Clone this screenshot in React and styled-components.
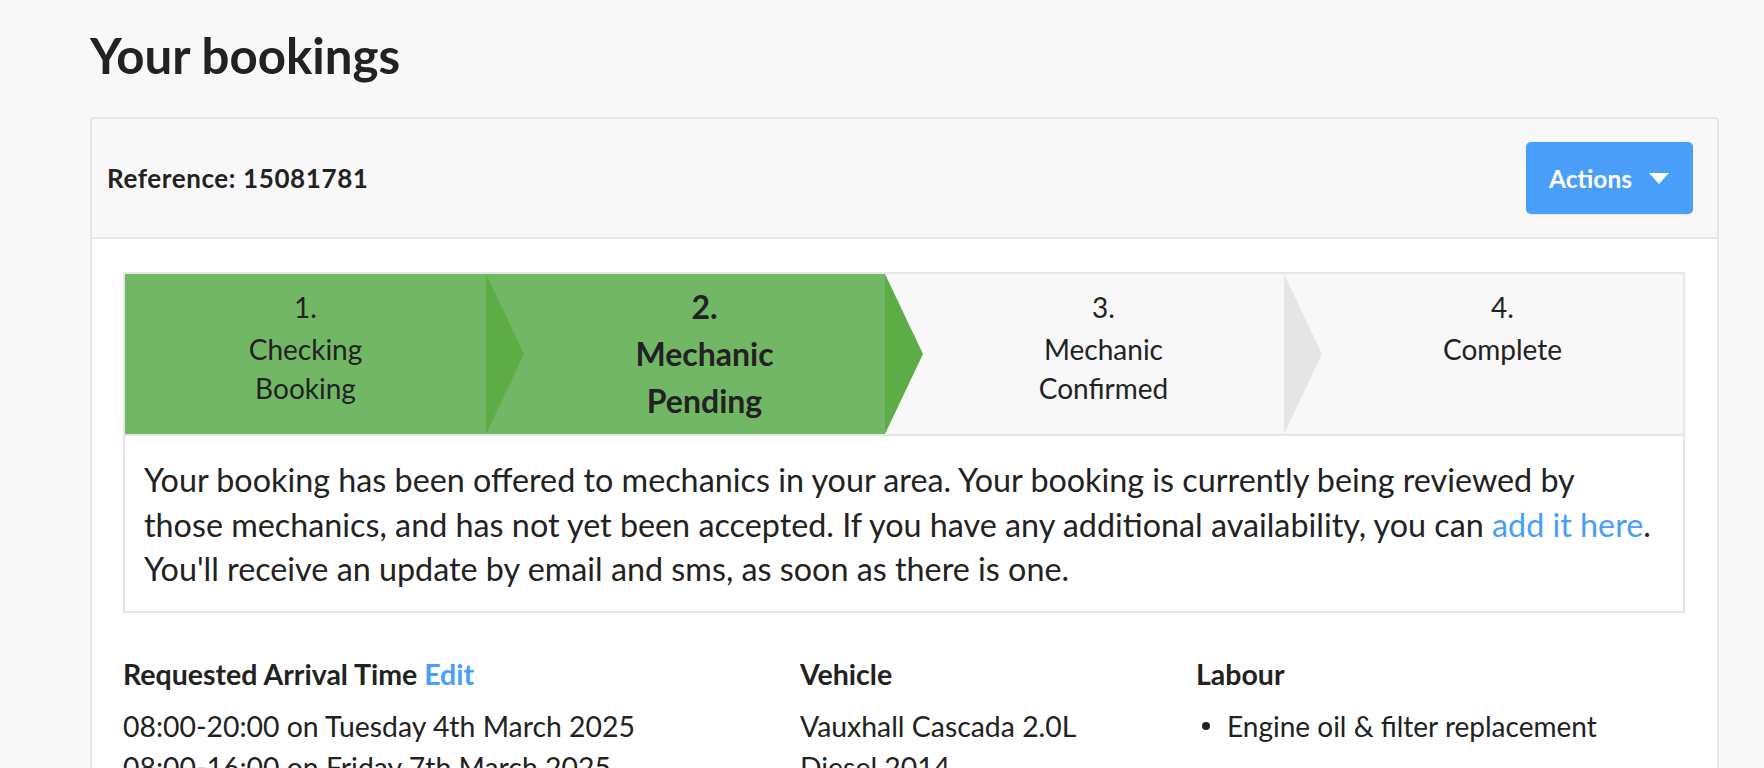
import React from "react";
import styled, { createGlobalStyle } from "styled-components";

const GlobalStyle = createGlobalStyle`
  * { box-sizing: border-box; }
  html, body { margin: 0; padding: 0; background: #f8f8f8; }
  body {
    font-family: Lato, "Liberation Sans", sans-serif;
    color: #222222;
    -webkit-font-smoothing: antialiased;
  }
`;

const Page = styled.main`
  padding: 26px 45px 40px 90px;
`;

const Title = styled.h1`
  margin: 0 0 33px;
  font-size: 49.2px;
  line-height: 58px;
  font-weight: 700;
  color: #222;
`;

const Card = styled.section`
  background: #fff;
  border: 2px solid #e6e6e6;
  border-radius: 4px;
`;

const CardHeader = styled.header`
  display: flex;
  align-items: center;
  justify-content: space-between;
  height: 120px;
  padding: 0 24px 0 15px;
  background: #f8f8f8;
  border-bottom: 2px solid #e6e6e6;
  border-radius: 4px 4px 0 0;
`;

const RefLabel = styled.div`
  font-size: 26px;
  letter-spacing: 0.6px;
  font-weight: 700;
`;

const ActionsButton = styled.button`
  display: flex;
  align-items: center;
  gap: 17px;
  height: 72px;
  padding: 0 24px 0 23px;
  border: none;
  border-radius: 5px;
  background: #489ef8;
  color: #fff;
  font-family: inherit;
  font-size: 24.5px;
  font-weight: 700;
  box-shadow: 0 1px 2px rgba(0, 0, 0, 0.08);
`;

const Caret = styled.span`
  width: 0;
  height: 0;
  border-left: 10px solid transparent;
  border-right: 10px solid transparent;
  border-top: 11px solid #fff;
`;

const CardBody = styled.div`
  padding: 33px 32px 0 31px;
`;

const Stepper = styled.ol`
  display: flex;
  margin: 0;
  padding: 0;
  list-style: none;
  border: 2px solid #e6e6e6;
  height: 164px;
`;

const Step = styled.li`
  flex: 1;
  padding-top: 9.5px;
  text-align: center;
  background: ${(p) => (p.$done ? "#72b765" : "#f8f8f8")};
  font-size: ${(p) => (p.$active ? "32px" : "28px")};
  font-weight: ${(p) => (p.$active ? 700 : 400)};
`;

const StepNumber = styled.div`
  line-height: 46px;
`;

const StepLabel = styled.div`
  line-height: ${(p) => (p.$active ? "47px" : "39px")};
`;

const Chevron = styled.div`
  flex: 0 0 38px;
  background: ${(p) => p.$behind};
  position: relative;
  &::before {
    content: "";
    position: absolute;
    inset: 0;
    background: ${(p) => p.$tone};
    clip-path: polygon(0 0, 100% 50%, 0 100%);
  }
`;

const Notice = styled.p`
  margin: 0;
  padding: 22px 30px 19px 19px;
  border: 2px solid #e6e6e6;
  border-top: none;
  font-size: 32.3px;
  line-height: 44.5px;
`;

const Link = styled.a`
  color: #489ef8;
  text-decoration: none;
`;

const Details = styled.div`
  display: grid;
  grid-template-columns: 677px 396px 1fr;
  margin-top: 42px;
`;

const Column = styled.div`
  padding-right: ${(p) => p.$pad || "0px"};
`;

const Heading = styled.h3`
  margin: 0 0 12px;
  font-size: 28.5px;
  line-height: 39px;
  font-weight: 700;
`;

const Value = styled.div`
  font-size: 28.4px;
  line-height: 41.5px;
`;

const Items = styled.ul`
  margin: 0;
  padding: 0;
  list-style: none;
`;

const Item = styled.li`
  display: flex;
  align-items: center;
  font-size: 28px;
  line-height: 41.5px;
  &::before {
    content: "";
    flex: 0 0 8px;
    height: 8px;
    margin: 0 17px 0 6px;
    border-radius: 50%;
    background: #222;
  }
`;

const steps = [
  { n: "1.", label: ["Checking", "Booking"], done: true },
  { n: "2.", label: ["Mechanic", "Pending"], done: true, active: true },
  { n: "3.", label: ["Mechanic", "Confirmed"] },
  { n: "4.", label: ["Complete"] },
];

const chevrons = [
  { tone: "#5dac45", behind: "#72b765" },
  { tone: "#5dac45", behind: "#f8f8f8" },
  { tone: "#e5e5e5", behind: "#f8f8f8" },
];

export default function App() {
  return (
    <>
      <GlobalStyle />
      <Page>
        <Title>Your bookings</Title>
        <Card>
          <CardHeader>
            <RefLabel>Reference: 15081781</RefLabel>
            <ActionsButton type="button">
              Actions
              <Caret />
            </ActionsButton>
          </CardHeader>
          <CardBody>
            <Stepper>
              {steps.map((s, i) => (
                <React.Fragment key={s.n}>
                  <Step $done={s.done} $active={s.active}>
                    <StepNumber>{s.n}</StepNumber>
                    {s.label.map((l) => (
                      <StepLabel key={l} $active={s.active}>
                        {l}
                      </StepLabel>
                    ))}
                  </Step>
                  {chevrons[i] && (
                    <Chevron $tone={chevrons[i].tone} $behind={chevrons[i].behind} />
                  )}
                </React.Fragment>
              ))}
            </Stepper>
            <Notice>
              Your booking has been offered to mechanics in your area. Your booking is
              currently being reviewed by those mechanics, and has not yet been accepted.
              If you have any additional availability, you can{" "}
              <Link href="#">add it here</Link>. You'll receive an update by email and
              sms, as soon as there is one.
            </Notice>
            <Details>
              <Column>
                <Heading>
                  Requested Arrival Time <Link href="#">Edit</Link>
                </Heading>
                <Value>08:00-20:00 on Tuesday 4th March 2025</Value>
                <Value>08:00-16:00 on Friday 7th March 2025</Value>
              </Column>
              <Column $pad="50px">
                <Heading>Vehicle</Heading>
                <Value>Vauxhall Cascada 2.0L Diesel 2014</Value>
              </Column>
              <Column>
                <Heading>Labour</Heading>
                <Items>
                  <Item>Engine oil &amp; filter replacement</Item>
                </Items>
              </Column>
            </Details>
          </CardBody>
        </Card>
      </Page>
    </>
  );
}
